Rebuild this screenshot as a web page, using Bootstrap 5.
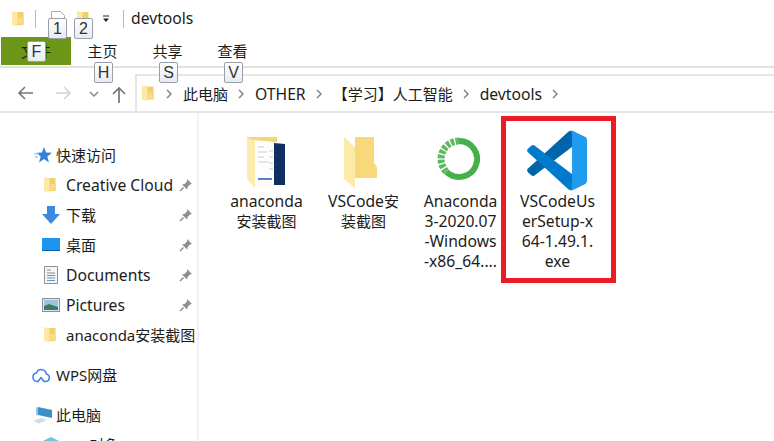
<!DOCTYPE html>
<html lang="zh-CN">
<head>
    <meta charset="UTF-8">
    <meta name="viewport" content="width=device-width, initial-scale=1.0">
    <title>devtools</title>
    <link rel="stylesheet" href="https://cdn.jsdelivr.net/npm/bootstrap@5.3.2/dist/css/bootstrap.min.css">
    <style>
        body {
            width: 774px;
            height: 441px;
            overflow: hidden;
            background: #fff;
            color: #1c1c1c;
            font-family: "Noto Sans", "Noto Sans CJK SC", sans-serif;
            font-size: 15px;
        }
        .lat { font-size: 15.7px; }
        .explorer-top { height: 113px; border-bottom: 2px solid #e6e6e6; }
        .title-row { height: 37px; padding-left: 12px; }
        .title-sep { width: 1px; height: 18px; background: #b9b9b9; }
        .gap-a { margin-left: 11px; }
        .gap-b { margin-left: 15px; }
        .gap-c { margin-left: 12px; }
        .gap-d { margin-left: 13px; }
        .gap-e { margin-left: 7px; }
        .tab-row { height: 31px; border-bottom: 2px solid #e2e2e2; }
        .file-tab { width: 70px; height: 28px; margin-left: 1px; margin-right: -1px; background: #6b9618; line-height: 28px; }
        .home-tab { width: 65px; height: 28px; line-height: 28px; }
        .addr-row { height: 43px; padding-top: 6px; }
        .addr-box { height: 37px; margin-left: 135px; border: 2px solid #e6e6e6; border-right: 0; border-bottom: 0; padding-left: 5px; }
        .nav-arrow { top: 86px; }
        .nav-back { left: 17px; }
        .nav-fwd { left: 56px; }
        .nav-down { left: 89px; top: 91px; }
        .nav-up { left: 112px; top: 86px; }
        .first-chev { margin-left: 12px; }
        .crumb { margin-left: 11px; margin-right: 10px; line-height: 34px; white-space: nowrap; }
        .key-tip {
            position: absolute;
            width: 19px;
            height: 21px;
            line-height: 19px;
            text-align: center;
            font-size: 16px;
            color: #333;
            background: linear-gradient(#fff, #e6ebf3);
            border: 1px solid #9a9ea6;
            border-radius: 2px;
            font-family: "Liberation Sans", sans-serif;
        }
        .kt-1 { left: 48px; top: 18px; }
        .kt-2 { left: 74px; top: 18px; }
        .kt-f { left: 27px; top: 41px; }
        .kt-h { left: 94px; top: 62px; }
        .kt-s { left: 159px; top: 62px; }
        .kt-v { left: 224px; top: 62px; }
        .abs-icon { position: absolute; }
        .side-pane { width: 199px; height: 328px; padding-top: 27px; border-right: 2px solid #f2f2f2; }
        .side-row { height: 30px; line-height: 30px; white-space: nowrap; }
        .side-top { padding-left: 33px; }
        .side-sub { padding-left: 41px; }
        .side-cloud { padding-left: 31px; }
        .side-gap { margin-top: 10px; }
        .side-icon { width: 20px; height: 20px; margin-right: 3px; flex: none; }
        .side-sub .side-icon { margin-right: 5px; }
        .side-cloud .side-icon { margin-right: 5px; }
        .pin-icon { position: absolute; left: 179px; }
        .file-grid { padding: 14px 0 0 19px; }
        .file-item { width: 97px; text-align: center; line-height: 20px; }
        .file-icon { height: 64px; }
        .red-mark { position: absolute; left: 501px; top: 116px; width: 115px; height: 167px; border: 5px solid #ed1c24; }
    </style>
</head>
<body>
    <svg width="0" height="0" class="position-absolute">
        <symbol id="tiny-folder" viewBox="0 0 12 16">
            <path d="M3 1h8.500v13H3z" fill="#f3cf6b"/>
            <path d="M0 0l5.500 1.500v14L0 14z" fill="#fce9a6"/>
            <path d="M5 7h7v6H5z" fill="#f8dc85"/>
        </symbol>
        <symbol id="pin" viewBox="0 0 14 14">
            <path d="M8 1l5 5-2 .6-2.400 2.400-.4 2.600L3 6.400l2.600-.4L8 3.500z" fill="#8d8d8d"/>
            <path d="M4.500 9.500L1 13" stroke="#8d8d8d" stroke-width="1.500"/>
        </symbol>
        <symbol id="chev" viewBox="0 0 6 10">
            <path d="M1 1l4 4-4 4" fill="none" stroke="#777" stroke-width="1.300"/>
        </symbol>
    </svg>

    <div class="explorer-top position-relative">
        <div class="title-row d-flex align-items-center">
            <svg width="12" height="16"><use href="#tiny-folder"/></svg>
            <span class="title-sep gap-a"></span>
            <svg class="gap-b" width="14" height="16" viewBox="0 0 14 16"><path d="M.5.500h9l4 4v11H.500z" fill="#fff" stroke="#aaa"/><path d="M9 12l3-3" stroke="#d9532c" stroke-width="2"/></svg>
            <svg class="gap-c" width="12" height="16"><use href="#tiny-folder"/></svg>
            <svg class="gap-d" width="8" height="8" viewBox="0 0 8 8"><path d="M1 1h6" stroke="#222"/><path d="M1 3.500h6L4 7z" fill="#222"/></svg>
            <span class="title-sep gap-d"></span>
            <span class="gap-e lat">devtools</span>
        </div>
        <div class="tab-row d-flex">
            <div class="file-tab text-center">文件</div>
            <div class="home-tab text-center">主页</div>
            <div class="home-tab text-center">共享</div>
            <div class="home-tab text-center">查看</div>
        </div>
        <div class="addr-row">
            <div class="addr-box d-flex align-items-center">
                <svg width="12" height="17"><use href="#tiny-folder"/></svg>
                <svg class="first-chev" width="6" height="10"><use href="#chev"/></svg>
                <span class="crumb">此电脑</span>
                <svg width="6" height="10"><use href="#chev"/></svg>
                <span class="crumb lat">OTHER</span>
                <svg width="6" height="10"><use href="#chev"/></svg>
                <span class="crumb">【学习】人工智能</span>
                <svg width="6" height="10"><use href="#chev"/></svg>
                <span class="crumb lat">devtools</span>
                <svg width="6" height="10"><use href="#chev"/></svg>
            </div>
        </div>

        <!-- nav arrows sit in the strip left of the address box -->
        <svg class="abs-icon nav-arrow nav-back" width="16" height="14" viewBox="0 0 16 14"><path d="M16 7H2M8 1L2 7l6 6" fill="none" stroke="#777" stroke-width="1.600"/></svg>
        <svg class="abs-icon nav-arrow nav-fwd" width="16" height="14" viewBox="0 0 16 14"><path d="M0 7h14M8 1l6 6-6 6" fill="none" stroke="#d4d4d4" stroke-width="1.600"/></svg>
        <svg class="abs-icon nav-down" width="10" height="7" viewBox="0 0 10 7"><path d="M1 1l4 4 4-4" fill="none" stroke="#888" stroke-width="1.500"/></svg>
        <svg class="abs-icon nav-up" width="14" height="17" viewBox="0 0 14 17"><path d="M7 17V2M1 8l6-6 6 6" fill="none" stroke="#777" stroke-width="1.700"/></svg>

        <span class="key-tip kt-1">1</span>
        <span class="key-tip kt-2">2</span>
        <span class="key-tip kt-f">F</span>
        <span class="key-tip kt-h">H</span>
        <span class="key-tip kt-s">S</span>
        <span class="key-tip kt-v">V</span>
    </div>

    <div class="d-flex position-relative">
        <div class="side-pane flex-shrink-0">
            <div class="side-row side-top d-flex align-items-center">
                <svg class="side-icon" viewBox="0 0 20 20"><path d="M11 2l2 5.500 6 .2-4.700 3.700 1.700 6-5-3.500-5 3.500 1.700-6L3 7.700l6-.2z" fill="#2f83d8"/><path d="M1 9h5M2 12h3" stroke="#a9cdf0" stroke-width="1.500"/></svg>
                <span>快速访问</span>
            </div>
            <div class="side-row side-sub d-flex align-items-center">
                <svg class="side-icon" viewBox="-3 -2 20 20"><use href="#tiny-folder" width="12" height="16"/></svg>
                <span class="lat">Creative Cloud</span>
                <svg class="pin-icon" width="14" height="14"><use href="#pin"/></svg>
            </div>
            <div class="side-row side-sub d-flex align-items-center">
                <svg class="side-icon" viewBox="0 0 20 20"><path d="M6 1h8v8h5l-9 10L1 9h5z" fill="#3b8ae0"/></svg>
                <span>下载</span>
                <svg class="pin-icon" width="14" height="14"><use href="#pin"/></svg>
            </div>
            <div class="side-row side-sub d-flex align-items-center">
                <svg class="side-icon" viewBox="0 0 20 20"><rect x="1" y="3" width="18" height="13" fill="#1c95ee"/><path d="M1 15.500h18" stroke="#0b5fa8"/></svg>
                <span>桌面</span>
                <svg class="pin-icon" width="14" height="14"><use href="#pin"/></svg>
            </div>
            <div class="side-row side-sub d-flex align-items-center">
                <svg class="side-icon" viewBox="0 0 20 20"><path d="M3.500 1.500h13v17h-13z" fill="#f4f6f8" stroke="#8f8f8f"/><path d="M6 5h4M6 8h8M6 10.500h8M6 13h8M6 15.500h8" stroke="#6d93b5"/></svg>
                <span class="lat">Documents</span>
                <svg class="pin-icon" width="14" height="14"><use href="#pin"/></svg>
            </div>
            <div class="side-row side-sub d-flex align-items-center">
                <svg class="side-icon" viewBox="0 0 20 20"><rect x="1.500" y="3.500" width="17" height="13" fill="#dfe7ee" stroke="#8f8f8f"/><rect x="3" y="5" width="14" height="10" fill="#9dc3e2"/><path d="M3 11l5-2 9 3v3H3z" fill="#3f7a68"/></svg>
                <span class="lat">Pictures</span>
                <svg class="pin-icon" width="14" height="14"><use href="#pin"/></svg>
            </div>
            <div class="side-row side-sub d-flex align-items-center">
                <svg class="side-icon" viewBox="-3 -2 20 20"><use href="#tiny-folder" width="12" height="16"/></svg>
                <span>anaconda安装截图</span>
            </div>
            <div class="side-row side-cloud side-gap d-flex align-items-center">
                <svg class="side-icon" viewBox="0 0 20 20"><path d="M6 16.500a4.300 4.300 0 0 1-.6-8.500 5.200 5.200 0 0 1 10 1 3.800 3.800 0 0 1-.6 7.500H13l-3-4-3 4z" fill="none" stroke="#3c7fe6" stroke-width="1.500" stroke-linejoin="round"/></svg>
                <span>WPS网盘</span>
            </div>
            <div class="side-row side-top side-gap d-flex align-items-center">
                <svg class="side-icon" viewBox="0 0 20 20"><path d="M5 2l14 3v8L5 10z" fill="#3d8fc9"/><path d="M3 2.500l2-.5v8l-2 .5z" fill="#9cc7e4"/><path d="M0 16l8-3 6 2-8 3.500z" fill="#d8dadc"/></svg>
                <span>此电脑</span>
            </div>
            <div class="side-row side-sub d-flex align-items-center">
                <svg class="side-icon" viewBox="0 0 20 20"><path d="M10 2l8 4-8 4-8-4z" fill="#6ec6d8"/><path d="M2 6l8 4v8l-8-4z" fill="#3d9cb5"/></svg>
                <span>3D 对象</span>
            </div>
        </div>

        <div class="file-grid d-flex align-items-start">
            <div class="file-item">
                <svg class="file-icon d-block mx-auto" width="64" viewBox="0 0 64 64">
                    <path d="M12 10h30v41H12z" fill="#f5d674"/>
                    <path d="M19 13l31 3v44l-31 0z" fill="#fdfdfe"/>
                    <path d="M39 16l11 1v41H39z" fill="#0f2f63"/>
                    <path d="M23 20h6M23 25h9M23 30h6M23 35h10M34 24h4M34 30h4M34 36h4M34 42h4" stroke="#c3ccd9"/>
                    <path d="M23 52h14" stroke="#5b7fc6" stroke-width="2"/>
                    <path d="M12 10l8 4v47l-8-9z" fill="#fcebaa"/>
                </svg>
                <span class="lat">anaconda</span><br>安装截图
            </div>
            <div class="file-item">
                <svg class="file-icon d-block mx-auto" width="64" viewBox="0 0 64 64">
                    <path d="M12 10h30v26l3 4v11H23V10z" fill="#f7d97b"/>
                    <path d="M12 10l11 10v41L12 52z" fill="#fdeaa8"/>
                </svg>
                <span class="lat">VSCode</span>安<br>装截图
            </div>
            <div class="file-item">
                <svg class="file-icon d-block mx-auto" width="64" viewBox="2 1 64 64">
                    <path d="M32 15a18 18 0 1 1-12.700 30.700" fill="none" stroke="#43b049" stroke-width="6"/>
                    <path d="M32 15a18 18 0 0 0-12.700 30.700" fill="none" stroke="#5cba60" stroke-width="7" stroke-dasharray="3.500 1.300"/>
                </svg>
                <span class="lat">Anaconda<br>3-2020.07<br>-Windows<br>-x86_64....</span>
            </div>
            <div class="file-item">
                <svg class="file-icon d-block mx-auto" width="64" viewBox="-2 -6 107 107">
                    <path d="M96.4614 10.7962L75.8569 0.875542C73.4719 -0.272773 70.6217 0.211611 68.75 2.08333L1.29858 63.5832C-0.515693 65.2373 -0.513607 68.0937 1.30308 69.7452L6.81272 74.754C8.29793 76.1042 10.5347 76.2036 12.1338 74.9905L93.3609 13.3699C96.086 11.3026 100 13.2462 100 16.6667V16.4275C100 14.0265 98.6246 11.8378 96.4614 10.7962Z" fill="#0065A9"/>
                    <path d="M96.4614 89.2038L75.8569 99.1245C73.4719 100.273 70.6217 99.7884 68.75 97.9167L1.29858 36.4168C-0.515693 34.7627 -0.513607 31.9063 1.30308 30.2548L6.81272 25.246C8.29793 23.8958 10.5347 23.7964 12.1338 25.0095L93.3609 86.6301C96.086 88.6974 100 86.7538 100 83.3333V83.5725C100 85.9735 98.6246 88.1622 96.4614 89.2038Z" fill="#007ACC"/>
                    <path d="M75.8578 99.1263C73.4721 100.274 70.6219 99.7885 68.75 97.9166C71.0564 100.223 75 98.5895 75 95.3278V4.67213C75 1.41039 71.0564 -0.223106 68.75 2.08329C70.6219 0.211402 73.4721 -0.273666 75.8578 0.873633L96.4587 10.7807C98.6234 11.8217 100 14.0112 100 16.4132V83.5871C100 85.9891 98.6234 88.1786 96.4586 89.2196L75.8578 99.1263Z" fill="#1F9CF0"/>
                </svg>
                <span class="lat">VSCodeUs<br>erSetup-x<br>64-1.49.1.<br>exe</span>
            </div>
        </div>
    </div>

    <div class="red-mark"></div>

    <script src="https://cdn.jsdelivr.net/npm/bootstrap@5.3.2/dist/js/bootstrap.bundle.min.js"></script>
</body>
</html>
